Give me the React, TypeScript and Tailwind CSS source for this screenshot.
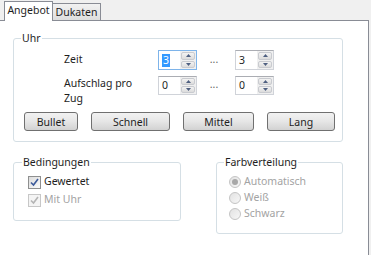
import React from 'react';

function SpinArrow({ up }: { up?: boolean }) {
  return (
    <div className="flex flex-1 items-center justify-center rounded-[2px] border border-[#c9cbd0] bg-gradient-to-b from-[#f3f3f3] to-[#dcdcdc]">
      <svg width="5" height="3" viewBox="0 0 5 3">
        {up ? <path d="M0 3 L2.5 0 L5 3 Z" fill="#4e5f80" /> : <path d="M0 0 L2.5 3 L5 0 Z" fill="#4e5f80" />}
      </svg>
    </div>
  );
}

function SpinBox({ value, focused, tall }: { value: string; focused?: boolean; tall?: boolean }) {
  return (
    <div
      className={`flex w-[39px] border bg-white ${tall ? 'h-[20px]' : 'h-[19px]'} ${
        focused ? 'border-[#7eb4ea]' : 'border-[#d0d3d9] border-t-[#abadb3]'
      }`}
    >
      <div className="flex flex-1 items-center pl-[3px]">
        {focused ? (
          <span className="bg-[#3399ff] px-px leading-[13px] text-white">{value}</span>
        ) : (
          <span className="leading-[13px]">{value}</span>
        )}
      </div>
      <div className="flex w-[16px] flex-col gap-px bg-[#f0f0f0] p-px">
        <SpinArrow up />
        <SpinArrow />
      </div>
    </div>
  );
}

function WinButton({ label, width }: { label: string; width: string }) {
  return (
    <button
      type="button"
      className={`${width} h-[19px] rounded-[3px] border border-[#707070] bg-gradient-to-b from-[#f2f2f2] via-[#e6e6e6] to-[#d2d2d2] text-center leading-[16px] text-[#1e1e1e]`}
    >
      {label}
    </button>
  );
}

function CheckBox({ label, disabled }: { label: string; disabled?: boolean }) {
  return (
    <div className="flex h-[18px] items-center gap-[3px]">
      <div
        className={`flex h-[13px] w-[13px] items-center justify-center border ${
          disabled ? 'border-[#c7c7c7] bg-[#f4f4f4]' : 'border-[#8e8f8f] bg-gradient-to-br from-[#dcdcdc] to-[#fbfbfb]'
        }`}
      >
        <svg width="9" height="9" viewBox="0 0 9 9">
          <path
            d="M1 4.5 L3.5 7 L8 1"
            fill="none"
            stroke={disabled ? '#b4b4b4' : '#3c5a9a'}
            strokeWidth="1.6"
          />
        </svg>
      </div>
      <span className={disabled ? 'text-[#a3a3a3]' : 'text-[#1e1e1e]'}>{label}</span>
    </div>
  );
}

function Radio({ label, checked }: { label: string; checked?: boolean }) {
  return (
    <div className="flex h-[16px] items-center gap-[3px]">
      <div className="flex h-[12px] w-[12px] items-center justify-center rounded-full border border-[#c4c4c4] bg-gradient-to-br from-[#e2e2e2] to-[#f7f7f7]">
        {checked && <div className="h-[6px] w-[6px] rounded-full bg-[#a8a8a8]" />}
      </div>
      <span className="text-[#a3a3a3]">{label}</span>
    </div>
  );
}

export default function App() {
  return (
    <div className="h-[255px] w-[371px] overflow-hidden bg-[#f0f0f0] font-['Noto_Sans','Liberation_Sans',sans-serif] text-[10.5px] text-[#1e1e1e]">
      {/* tabs */}
      <div className="flex h-[20px] items-end pl-[4px]">
        <div className="relative z-10 -mb-px flex h-[20px] w-[49px] items-center justify-center border-x border-t border-[#898c95] bg-white pb-[2px]">
          Angebot
        </div>
        <div className="flex h-[17px] w-[48px] items-center justify-center border-r border-t border-[#898c95] bg-gradient-to-b from-[#f2f2f2] to-[#dedede] pt-px">
          Dukaten
        </div>
      </div>

      {/* tab page */}
      <div className="h-[235px] w-[369px] border-r border-t border-[#898c95] bg-white pl-[13px] pt-[10px]">
        <fieldset className="w-[330px] rounded-[3px] border border-[#d5dfe5] pb-[10px]">
          <legend className="ml-[7px] px-px leading-[14px]">Uhr</legend>
          <div className="flex flex-col pl-[50px] pt-[5px]">
            <div className="flex items-center">
              <div className="w-[94px]">Zeit</div>
              <SpinBox value="3" focused tall />
              <div className="w-[38px] pr-[4px] text-center text-[#666]">...</div>
              <SpinBox value="3" tall />
            </div>
            <div className="mt-[6px] flex items-start">
              <div className="w-[94px] pr-[16px] leading-[15px]">Aufschlag pro Zug</div>
              <SpinBox value="0" />
              <div className="w-[38px] pr-[4px] text-center leading-[17px] text-[#666]">...</div>
              <SpinBox value="0" />
            </div>
          </div>
          <div className="mt-[6px] flex gap-[13px] pl-[10px]">
            <WinButton label="Bullet" width="w-[54px]" />
            <WinButton label="Schnell" width="w-[79px]" />
            <WinButton label="Mittel" width="w-[71px]" />
            <WinButton label="Lang" width="w-[68px]" />
          </div>
        </fieldset>

        <div className="mt-[13px] flex items-start gap-[35px]">
          <fieldset className="w-[168px] rounded-[3px] border border-[#d5dfe5] pb-[11px] pl-[14px]">
            <legend className="-ml-[6px] px-px leading-[14px]">Bedingungen</legend>
            <div className="flex flex-col pt-[4px]">
              <CheckBox label="Gewertet" />
              <CheckBox label="Mit Uhr" disabled />
            </div>
          </fieldset>
          <fieldset className="w-[127px] rounded-[3px] border border-[#d5dfe5] pb-[11px] pl-[12px]">
            <legend className="-ml-[5px] px-px leading-[14px]">Farbverteilung</legend>
            <div className="flex flex-col pt-[5px]">
              <Radio label="Automatisch" checked />
              <Radio label="Weiß" />
              <Radio label="Schwarz" />
            </div>
          </fieldset>
        </div>
      </div>
    </div>
  );
}
